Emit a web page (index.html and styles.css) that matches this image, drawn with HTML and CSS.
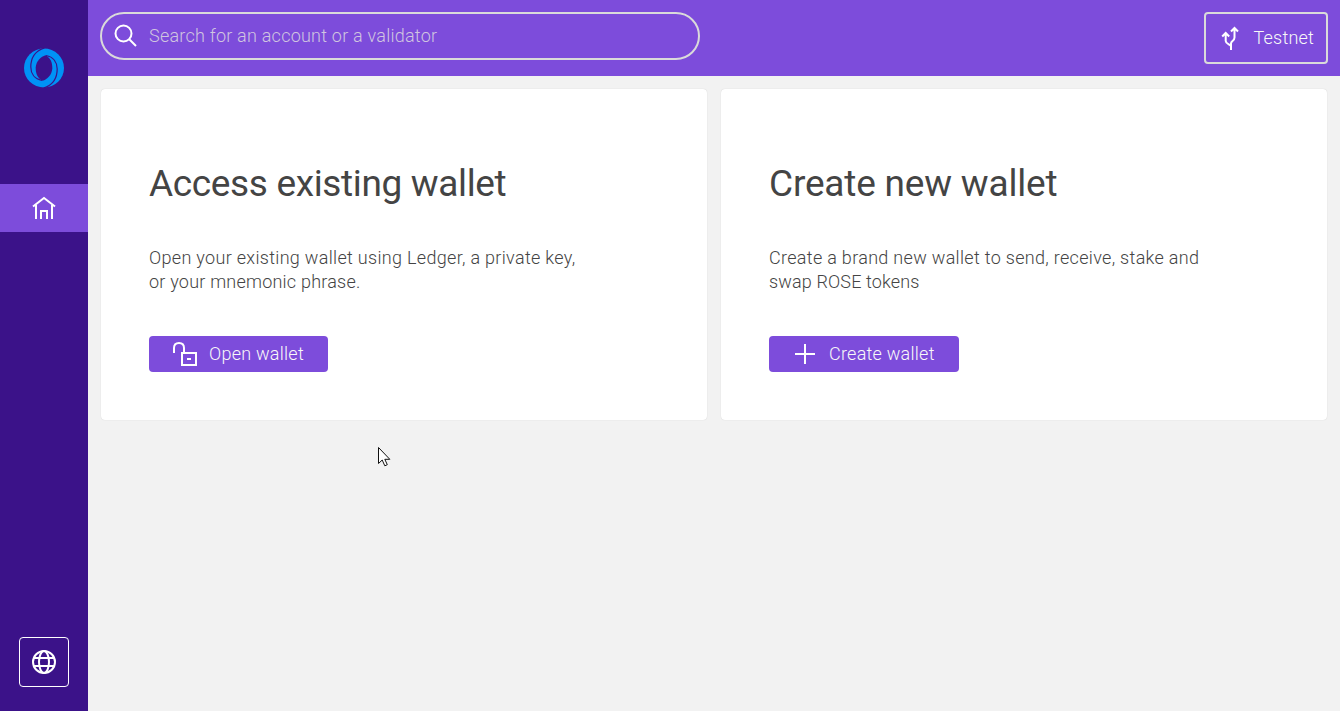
FILE: index.html
```html
<!DOCTYPE html>
<html lang="en">
<head>
<meta charset="utf-8">
<title>Wallet</title>
<link rel="stylesheet" href="styles.css">
</head>
<body>
<div class="app">
  <nav class="sidebar">
    <svg class="logo" viewBox="0 0 40 40">
      <ellipse cx="20" cy="20" rx="20" ry="19.500" fill="#0092f6"/>
      <path d="M21.500 7.200C26 9.500 28.500 14 28.300 20.500C28 27 23 31.500 18.500 32.800C14 30.500 11.500 26 11.700 19.500C12 13 17 8.500 21.500 7.200z" fill="#3b1289"/>
      <path d="M20.500 0C11 3 6.800 10.500 6.800 19C6.800 25.500 10.500 31 18 32.500" class="logo-gap"/>
      <path d="M19.500 40C29 37 33.200 29.500 33.200 21C33.200 14.500 29.500 9 22 7.500" class="logo-gap"/>
    </svg>
    <a class="nav-item"><svg class="icon" viewBox="0 0 24 24"><path d="M1 10.500 12 2l11 8.500M4 23V9M20 23V9M9 23v-8h6v8"/></svg></a>
    <button class="language"><svg class="icon" viewBox="0 0 24 24"><circle cx="12" cy="12" r="11"/><ellipse cx="12" cy="12" rx="5" ry="11"/><path d="M2 8h20M2 16h20"/></svg></button>
  </nav>
  <div class="page">
    <header class="topbar">
      <div class="search"><svg class="icon" viewBox="0 0 24 24"><circle cx="9.500" cy="9.500" r="8"/><path d="m15 15 7 7"/></svg><span class="search-text">Search for an account or a validator</span></div>
      <button class="network"><svg class="icon" viewBox="0 0 24 24"><path d="M13 24v-3.500c0-2-5.300-2.500-5.300-5.500V7.500M13 21v-3.500c0-2.500 3.500-2.500 3.500-6V2.500M4.200 10.500l3.500-3.500 3.500 3.500M13 5.500l3.500-3.500L20 5.500"/></svg><span class="network-text">Testnet</span></button>
    </header>
    <main class="cards">
      <section class="card">
        <h1><span class="h-access">Access existing wallet</span></h1>
        <p><span class="p-wide">Open your existing wallet using Ledger, a private key,</span><br><span class="p-or">or your mnemonic phrase.</span></p>
        <button class="action open"><svg class="icon" viewBox="0 0 24 24"><path d="M9 11h14v12H9zM14 17h4M1 11V6c0-3 2-5 5-5s5 2 5 5v5"/></svg><span>Open wallet</span></button>
      </section>
      <section class="card">
        <h1><span class="h-create">Create new wallet</span></h1>
        <p><span class="p-wide">Create a brand new wallet to send, receive, stake and</span><br><span class="p-swap">swap ROSE tokens</span></p>
        <button class="action create"><svg class="icon" viewBox="0 0 24 24"><path d="M12 2v20M2 12h20"/></svg><span>Create wallet</span></button>
      </section>
    </main>
  </div>
</div>
<svg class="cursor" viewBox="0 0 13 20"><path d="M.5 .5v16l3.700-3.500 2.600 5.800 2.500-1.100-2.500-5.400h5z"/></svg>
</body>
</html>
```
FILE: styles.css
```css
* { box-sizing: border-box; }
body { margin: 0; font: 300 18px/24px Roboto, sans-serif; color: #444; }
button { font: inherit; margin: 0; }
.app { display: flex; height: 711px; background: #f2f2f2; }
.sidebar { width: 88px; background: #3b1289; display: flex; flex-direction: column; align-items: center; padding: 48px 0 24px; }
.logo { width: 40px; height: 40px; }
.logo-gap { fill: none; stroke: #3b1289; stroke-width: 1.200; }
.icon { width: 24px; height: 24px; fill: none; stroke: #fff; stroke-width: 2; flex: none; display: block; }
.nav-item { width: 88px; height: 48px; margin-top: 96px; background: #7d4cdb; display: flex; align-items: center; justify-content: center; }
.language { width: 50px; height: 50px; margin-top: auto; padding: 0; background: none; border: 1px solid #fff; border-radius: 4px; display: flex; align-items: center; justify-content: center; }
.page { flex: 1; }
.topbar { height: 76px; background: #7d4cdb; padding: 12px; display: flex; justify-content: space-between; align-items: flex-start; }
.search { width: 600px; height: 48px; border: 2px solid #dadada; border-radius: 24px; padding-left: 12px; display: flex; align-items: center; gap: 11px; color: #d0c5e0; white-space: nowrap; }
.search-text { letter-spacing: .23px; }
.network { width: 124px; height: 52px; border: 2px solid #dadada; border-radius: 4px; background: none; color: #f8f8f8; padding: 0 0 0 12px; display: flex; align-items: center; gap: 11.500px; letter-spacing: .2px; }
.cards { padding: 13px; display: grid; grid-template-columns: 606px 606px; gap: 14px; }
.card { height: 331px; background: #fff; border-radius: 4px; box-shadow: 0 0 1px rgba(0,0,0,.2); padding: 73px 48px 48px; white-space: nowrap; }
h1 { margin: 0; font-size: 37px; line-height: 44px; font-weight: 400; }
.h-access { letter-spacing: -.35px; }
.h-create { letter-spacing: -.19px; }
p { margin: 40px 0 42px; }
.p-wide { letter-spacing: .31px; }
.p-or { letter-spacing: .22px; }
.p-swap { letter-spacing: .14px; }
.action { height: 36px; border: 0; border-radius: 4px; background: #7d4cdb; color: #f8f8f8; padding: 0 0 0 24px; display: flex; align-items: center; gap: 12px; letter-spacing: .25px; }
.open { width: 179px; }
.create { width: 190px; }
.cursor { position: absolute; left: 378px; top: 447px; width: 13px; height: 20px; fill: #fff; stroke: #111; stroke-width: 1; }
```
